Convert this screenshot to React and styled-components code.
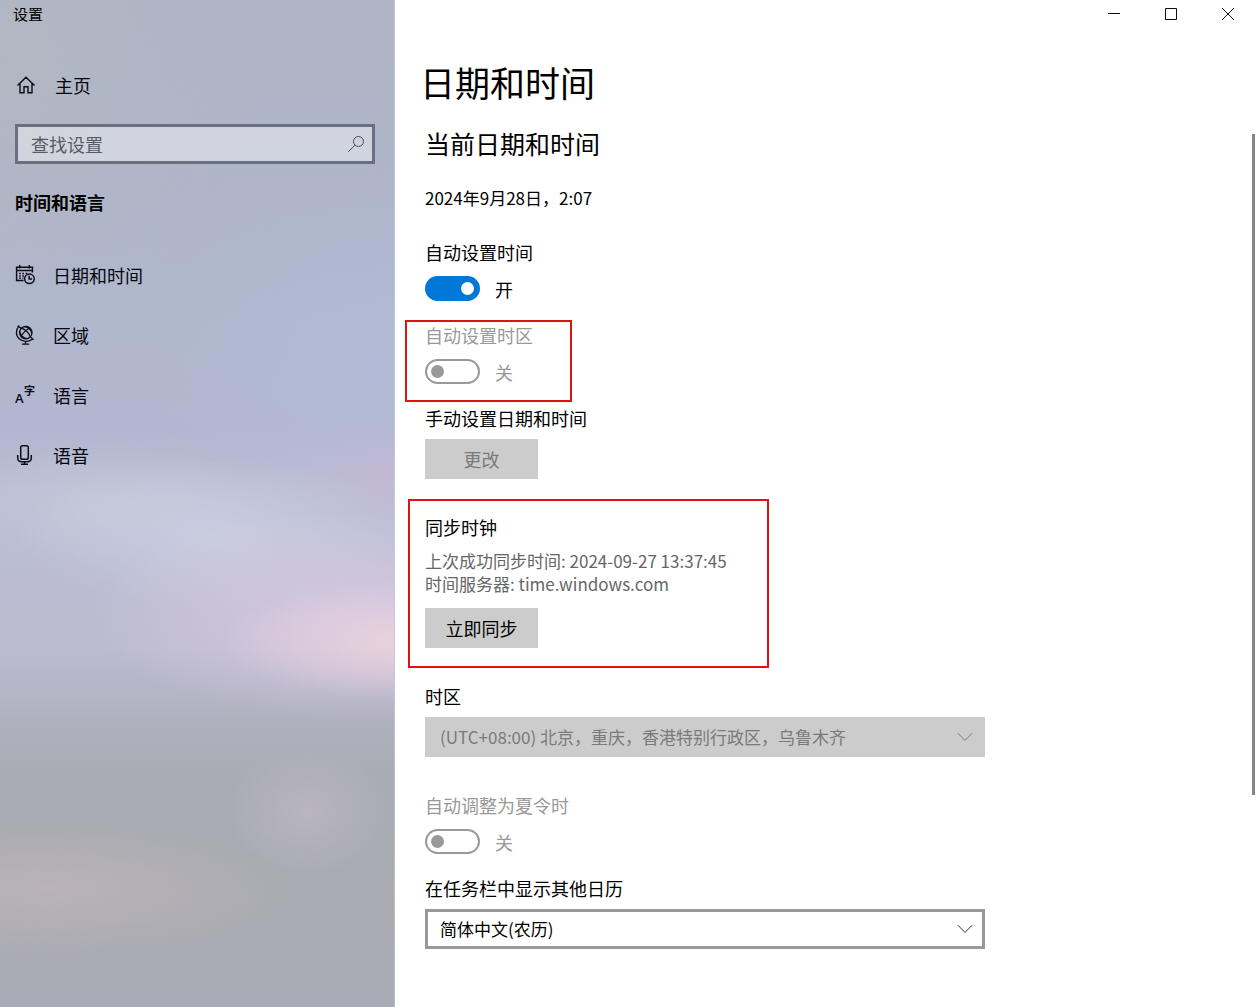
import React, { useState } from 'react';
import styled, { createGlobalStyle } from 'styled-components';

const GlobalStyle = createGlobalStyle`
  *, *::before, *::after {
    box-sizing: border-box;
  }

  body {
    margin: 0;
    background: #fff;
    color: #000;
    font-family: "Noto Sans CJK SC", "Open Sans", sans-serif;
    font-size: 18px;
    font-weight: 400;
    line-height: 24px;
  }

  h1, h2, h3, p {
    margin: 0;
    font-size: inherit;
    font-weight: inherit;
  }

  button, input, select {
    font: inherit;
    color: inherit;
  }
`;

const Window = styled.div`
  display: grid;
  grid-template-columns: 395px 1fr;
  min-height: 100vh;
`;

/* sidebar */

const Sidebar = styled.aside`
  display: flex;
  flex-direction: column;
  padding: 0 19px 0 15px;
  border-right: 1px solid rgba(255, 255, 255, 0.2);
  background:
    radial-gradient(ellipse 190px 58px at 104% 642px, rgba(236, 213, 218, 0.9), rgba(232, 208, 220, 0.5) 50%, rgba(226, 204, 222, 0) 100%),
    radial-gradient(ellipse 270px 105px at 92% 615px, rgba(216, 202, 226, 0.9), rgba(214, 200, 224, 0.6) 45%, rgba(206, 196, 220, 0) 100%),
    radial-gradient(ellipse 200px 75px at 55% 535px, rgba(205, 208, 228, 0.8), rgba(203, 207, 228, 0) 100%),
    radial-gradient(ellipse 170px 60px at 25% 505px, rgba(197, 204, 220, 0.6), rgba(197, 204, 220, 0) 100%),
    radial-gradient(ellipse 130px 60px at 100% 480px, rgba(200, 182, 212, 0.7), rgba(192, 180, 210, 0) 100%),
    radial-gradient(ellipse 80px 65px at 78% 812px, rgba(188, 183, 196, 0.8), rgba(188, 183, 196, 0) 100%),
    radial-gradient(ellipse 240px 65px at 12% 888px, rgba(188, 180, 184, 0.9), rgba(188, 180, 184, 0) 100%),
    radial-gradient(ellipse 240px 200px at 100% 370px, rgba(177, 188, 218, 0.7), rgba(177, 188, 218, 0) 100%),
    radial-gradient(ellipse 260px 260px at 0 60px, rgba(178, 184, 193, 0.8), rgba(178, 184, 193, 0) 100%),
    linear-gradient(
      #afb4c6 0,
      #afb5ca 200px,
      #b0b8cd 330px,
      #b4b6cf 430px,
      #b9bfd4 490px,
      #bbbcd2 580px,
      #bcbbd0 650px,
      #b4b4c4 700px,
      #adafba 735px,
      #aaacb4 780px,
      #a9abb2 850px,
      #ababb3 930px,
      #ababb7 1007px
    );
`;

const AppTitle = styled.div`
  height: 55px;
  margin-left: -2px;
  padding-top: 2px;
  font-size: 15px;
`;

const NavLink = styled.a`
  display: flex;
  align-items: center;
  gap: ${props => props.$gap || 18}px;
  height: 60px;
  color: #05060f;
  text-decoration: none;

  svg {
    flex-shrink: 0;
  }
`;

const SearchBox = styled.label`
  display: flex;
  align-items: center;
  height: 40px;
  margin: 9px 0 26px;
  padding: 0 7px 0 13px;
  border: 3px solid #6b7080;
  background: rgba(255, 255, 255, 0.42);
`;

const SearchInput = styled.input`
  flex: 1;
  min-width: 0;
  padding: 0;
  border: 0;
  outline: 0;
  background: none;

  &::placeholder {
    color: #585b66;
    opacity: 1;
  }
`;

const SidebarHeading = styled.h2`
  margin-bottom: 31px;
  && {
    font-weight: 700;
  }
`;

/* main area */

const Main = styled.main`
  display: flex;
  flex-direction: column;
  min-width: 0;
  padding-left: 30px;
`;

const WindowControls = styled.div`
  display: flex;
  justify-content: flex-end;
  height: 28px;
  padding-right: 1px;
`;

const ControlButton = styled.button`
  display: flex;
  align-items: center;
  justify-content: center;
  width: 57px;
  padding: 0;
  border: 0;
  background: none;
`;

const PageTitle = styled.h1`
  margin: 30px 0 20px -5px;
  font-size: 35px;
  line-height: 48px;
`;

const Body = styled.div`
  display: flex;
  flex: 1;
  justify-content: space-between;
`;

const Content = styled.div`
  flex: 1;
  max-width: 560px;
  padding-bottom: 58px;
`;

const SubTitle = styled.h2`
  margin-bottom: 26px;
  font-size: 25px;
  line-height: 34px;
`;

const CurrentTime = styled.p`
  margin-bottom: 31px;
  font-size: 17px;
`;

const ScrollTrack = styled.div`
  width: 5px;
  padding-top: 8px;
`;

const ScrollThumb = styled.div`
  width: 3px;
  height: 661px;
  background: #858585;
`;

const Section = styled.section`
  margin-bottom: ${props => props.$tight ? 23 : 37}px;
  color: ${props => props.$disabled ? '#999' : '#000'};
`;

// red frame drawn around a section
const MarkedSection = styled(Section)`
  position: relative;

  &::after {
    content: "";
    position: absolute;
    inset: ${props => props.$frame};
    width: ${props => props.$frameWidth}px;
    border: 2px solid #de1414;
    pointer-events: none;
  }
`;

const FieldLabel = styled.label`
  display: block;
  padding-bottom: 2px;
  line-height: 22px;
`;

const FieldTitle = styled.h3`
  padding-bottom: 2px;
  line-height: 22px;
`;

const ToggleRow = styled.div`
  display: flex;
  align-items: center;
  gap: 15px;
  height: 25px;
  margin-top: 11px;
`;

const Switch = styled.input`
  display: flex;
  align-items: center;
  width: 55px;
  height: 25px;
  margin: 0;
  padding: 0 4px;
  appearance: none;
  border: 2px solid #999;
  border-radius: 13px;

  &::before {
    content: "";
    width: 13px;
    height: 13px;
    border-radius: 50%;
    background: #999;
  }

  &:checked {
    justify-content: flex-end;
    border-color: #0078d7;
    background: #0078d7;
  }

  &:checked::before {
    background: #fff;
  }
`;

const Button = styled.button`
  display: block;
  width: 113px;
  height: 40px;
  margin-top: ${props => props.$gap || 8}px;
  padding: 0;
  border: 0;
  background: #ccc;

  &:disabled {
    color: #7a7a7a;
  }
`;

const SyncInfo = styled.p`
  margin: 9px 0 13px;
  color: #666;
  font-size: 17px;
  line-height: 23px;
`;

const SelectWrap = styled.div`
  display: grid;
  align-items: center;
  margin-top: 8px;

  > * {
    grid-area: 1 / 1;
  }

  svg {
    justify-self: end;
    margin-right: 12px;
    pointer-events: none;
  }
`;

const Select = styled.select`
  width: 100%;
  height: 40px;
  padding: 0 40px 0 12px;
  appearance: none;
  border: 3px solid #999;
  border-radius: 0;
  background: #fff;
  font-size: 17px;

  &:disabled {
    border-color: #ccc;
    background: #ccc;
    color: #7a7a7a;
    opacity: 1;
  }
`;

const Icon = ({ size = 20, width = 1.2, children }) => (
  <svg width={size} height={size} viewBox={`0 0 ${size} ${size}`} fill="none"
    stroke="#0b0d1a" strokeWidth={width} aria-hidden="true">
    {children}
  </svg>
);

const HomeIcon = () => (
  <Icon width={1.4}>
    <path d="M1.5 10.5 10 2.2l8.5 8.3M4 8.5v9.3h4v-6h4v6h4V8.5" transform="translate(1 0)" />
  </Icon>
);

const SearchIcon = () => (
  <svg width="18" height="18" viewBox="0 0 18 18" fill="none" stroke="#4b4e5a" aria-hidden="true">
    <circle cx="11.5" cy="6.5" r="5" />
    <path d="M8 10.2 1.2 16.8" />
  </svg>
);

const CalendarIcon = () => (
  <Icon width={1.5}>
    <path d="M8.5 15.5H1.6V2.2h15.8v5.2M1.6 5.5h15.8M4.7 0v3.6M14.3 0v3.6" />
    <path d="M4.2 8.600h1.600M7.400 8.600h1.600M10.600 8.600h1.600M4.200 11h1.600M7.400 11h1.600M4.200 13.200h1.600M7.400 13.200h1" />
    <circle cx="14.4" cy="13.8" r="4.8" />
    <path d="M14.2 10.8v3.300h2.800" />
  </Icon>
);

const GlobeIcon = () => (
  <Icon width={1.3}>
    <circle cx="10.8" cy="7.6" r="6.2" />
    <path d="M4.300.6C.6 4.600.5 10.400 4.200 13.700s9 3.500 13.100.5M2.600.8 6.200 3.400M15.200 11.800l3.400 3M10.500 16v3M7 19.200h7.200" />
    <path d="M6.400 3.200C10 4.200 14.500 8 15.200 11.900M15.200 3.200C11 4.600 7 8.600 6.200 12M9.500 1.600c3.500.4 6.500 3 7.300 6.800M4.700 6.700c.8 3.600 4 6.700 7.600 7" />
  </Icon>
);

const LanguageIcon = () => (
  <svg width="20" height="26" viewBox="0 -3 20 26" fill="#0b0d1a" aria-hidden="true">
    <text x="0" y="18" fontSize="13" fontWeight="600" fontFamily="Open Sans, sans-serif">A</text>
    <text x="9" y="10" fontSize="11" fontWeight="700">字</text>
  </svg>
);

const MicIcon = () => (
  <Icon width={1.5}>
    <rect x="5.7" y=".8" width="7.6" height="13.4" rx="1.8" />
    <path d="M2.700 10v2.800c0 2.600 1.500 4 4 4h5.600c2.500 0 4-1.400 4-4V10M9.500 17v2.400M6 19.200h7" />
  </Icon>
);

const Chevron = ({ color }) => (
  <svg width="16" height="10" viewBox="0 0 16 10" fill="none" stroke={color} strokeWidth="1" aria-hidden="true">
    <path d="M.8 1.200 8 8.400l7.200-7.200" />
  </svg>
);

const navItems = [
  { id: 'datetime', name: '日期和时间', icon: <CalendarIcon /> },
  { id: 'region', name: '区域', icon: <GlobeIcon /> },
  { id: 'language', name: '语言', icon: <LanguageIcon /> },
  { id: 'speech', name: '语音', icon: <MicIcon /> },
];

const Toggle = ({ id, checked, disabled, onChange }) => (
  <ToggleRow>
    <Switch id={id} type="checkbox" role="switch" checked={checked} disabled={disabled}
      onChange={(e) => onChange && onChange(e.target.checked)} />
    <span>{checked ? '开' : '关'}</span>
  </ToggleRow>
);

const App = () => {
  const [autoTime, setAutoTime] = useState(true);

  return (
    <>
      <GlobalStyle />
      <Window>
        <Sidebar>
          <AppTitle>设置</AppTitle>
          <NavLink href="#home" $gap={20}>
            <HomeIcon />
            <span>主页</span>
          </NavLink>
          <SearchBox>
            <SearchInput type="text" placeholder="查找设置" aria-label="查找设置" />
            <SearchIcon />
          </SearchBox>
          <SidebarHeading>时间和语言</SidebarHeading>
          <nav>
            {navItems.map((item) => (
              <NavLink key={item.id} href={`#${item.id}`}>
                {item.icon}
                <span>{item.name}</span>
              </NavLink>
            ))}
          </nav>
        </Sidebar>

        <Main>
          <WindowControls>
            <ControlButton aria-label="最小化">
              <Icon size={12} width={1}><path d="M0 5.500h12" /></Icon>
            </ControlButton>
            <ControlButton aria-label="最大化">
              <Icon size={12} width={1}><path d="M.5.5h11v11H.5z" /></Icon>
            </ControlButton>
            <ControlButton aria-label="关闭">
              <Icon size={12} width={1}><path d="m0 0 12 12M12 0 0 12" /></Icon>
            </ControlButton>
          </WindowControls>
          <PageTitle>日期和时间</PageTitle>

          <Body>
            <Content>
              <SubTitle>当前日期和时间</SubTitle>
              <CurrentTime>2024年9月28日，2:07</CurrentTime>

              <Section $tight>
                <FieldLabel htmlFor="autoTime">自动设置时间</FieldLabel>
                <Toggle id="autoTime" checked={autoTime} onChange={setAutoTime} />
              </Section>

              <MarkedSection $tight $disabled $frame="-4px auto -18px -20px" $frameWidth={167}>
                <FieldLabel htmlFor="autoZone">自动设置时区</FieldLabel>
                <Toggle id="autoZone" checked={false} disabled />
              </MarkedSection>

              <Section>
                <FieldTitle>手动设置日期和时间</FieldTitle>
                <Button disabled>更改</Button>
              </Section>

              <MarkedSection $frame="-17px auto -20px -17px" $frameWidth={361}>
                <FieldTitle>同步时钟</FieldTitle>
                <SyncInfo>
                  上次成功同步时间: 2024-09-27 13:37:45
                  <br />
                  时间服务器: time.windows.com
                </SyncInfo>
                <Button>立即同步</Button>
              </MarkedSection>

              <Section>
                <FieldLabel htmlFor="timeZone">时区</FieldLabel>
                <SelectWrap>
                  <Select id="timeZone" disabled>
                    <option>(UTC+08:00) 北京，重庆，香港特别行政区，乌鲁木齐</option>
                  </Select>
                  <Chevron color="#7a7a7a" />
                </SelectWrap>
              </Section>

              <Section $tight $disabled>
                <FieldLabel htmlFor="dst">自动调整为夏令时</FieldLabel>
                <Toggle id="dst" checked={false} disabled />
              </Section>

              <FieldLabel htmlFor="calendar">在任务栏中显示其他日历</FieldLabel>
              <SelectWrap>
                <Select id="calendar">
                  <option>简体中文(农历)</option>
                </Select>
                <Chevron color="#333" />
              </SelectWrap>
            </Content>
            <ScrollTrack>
              <ScrollThumb />
            </ScrollTrack>
          </Body>
        </Main>
      </Window>
    </>
  );
};

export default App;
